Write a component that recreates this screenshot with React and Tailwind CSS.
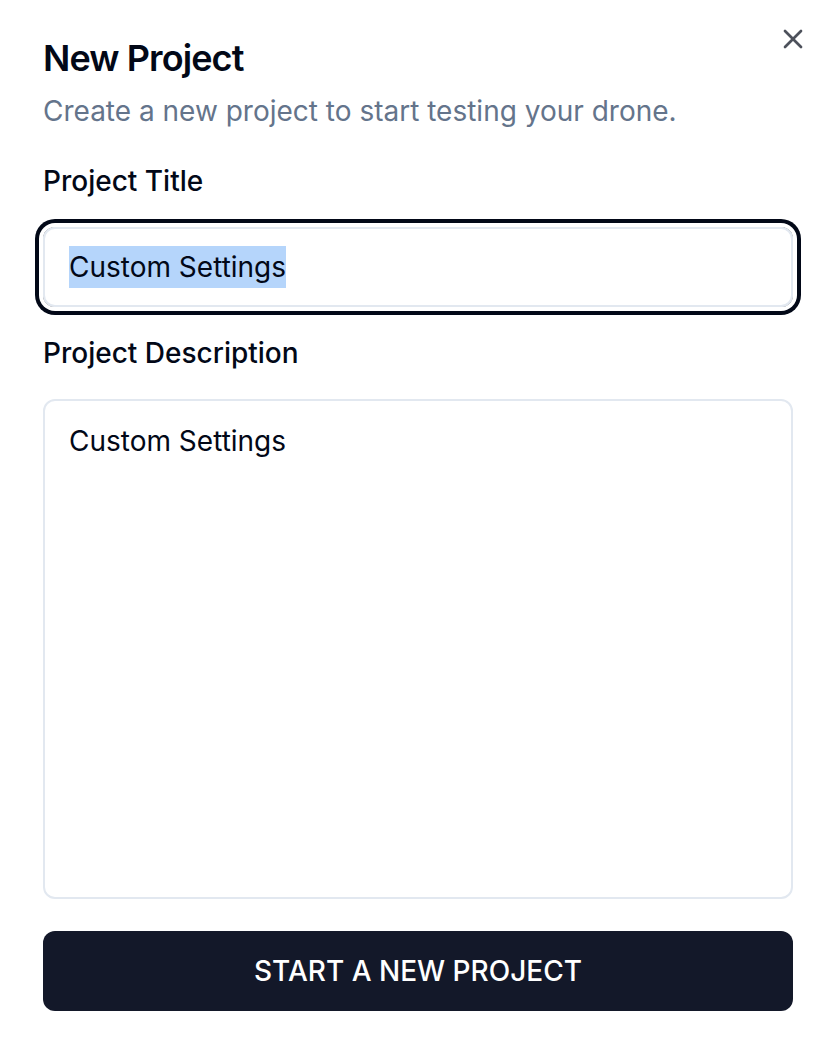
import React from "react";

export default function App() {
  return (
    <div className="relative w-[832px] h-[1054px] bg-white font-['Inter',sans-serif] text-[#020817]">
      <button className="absolute left-[777px] top-[23px] w-[32px] h-[32px] text-[#020817] opacity-70 flex items-center justify-center">
        <svg width="32" height="32" viewBox="0 0 24 24" fill="none" stroke="currentColor" strokeWidth="2" strokeLinecap="round" strokeLinejoin="round">
          <path d="M18 6 6 18" />
          <path d="m6 6 12 12" />
        </svg>
      </button>
      <div className="flex flex-col pl-[43px] pt-[40px] w-[793px]">
        <h2 className="text-[36px] leading-none font-semibold tracking-tight">New Project</h2>
        <p className="mt-[15px] text-[28px] leading-[40px] text-[#64748b]">
          Create a new project to start testing your drone.
        </p>
        <label className="mt-[36px] block text-[28px] leading-none font-medium">Project Title</label>
        <div className="mt-[32px] h-[80px] rounded-[12px] border-2 border-[#e2e8f0] shadow-[0_0_0_4px_#ffffff,0_0_0_8px_#020817] px-[24px] flex items-center text-[28px]">
          <span className="bg-[#b5d5fb]">Custom Settings</span>
        </div>
        <label className="mt-[32px] block text-[28px] leading-none font-medium">Project Description</label>
        <div className="mt-[32px] h-[500px] rounded-[12px] border-2 border-[#e2e8f0] px-[24px] pt-[20px] text-[28px] leading-[40px]">
          Custom Settings
        </div>
        <button className="mt-[32px] h-[80px] rounded-[12px] bg-[#131829] text-white text-[28px] font-medium flex items-center justify-center">
          START A NEW PROJECT
        </button>
      </div>
    </div>
  );
}
